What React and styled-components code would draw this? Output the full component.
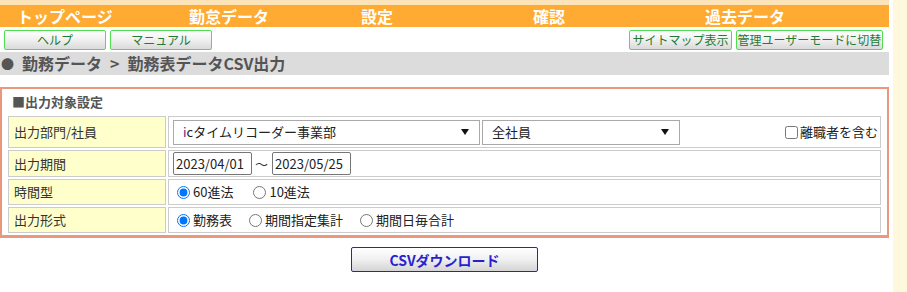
import React from 'react';
import styled, { createGlobalStyle } from 'styled-components';

const GlobalStyle = createGlobalStyle`
  * {
    margin: 0;
    padding: 0;
    box-sizing: border-box;
  }
  body {
    background: #fff;
    font-family: "Noto Sans CJK JP", "Liberation Sans", sans-serif;
    color: #333;
  }
`;

const navItems = ['トップページ', '勤怠データ', '設定', '確認', '過去データ'];

const Page = () => {
  return (
    <Layout>
      <GlobalStyle />
      <Main>
        <TopStrip />
        <Nav>
          {navItems.map((item) => (
            <NavItem key={item}>{item}</NavItem>
          ))}
        </Nav>
        <ToolRow>
          <ToolGroup>
            <GreenButton $w={102}>ヘルプ</GreenButton>
            <GreenButton $w={102}>マニュアル</GreenButton>
          </ToolGroup>
          <ToolGroup>
            <GreenButton $w={103}>サイトマップ表示</GreenButton>
            <GreenButton $w={147}>管理ユーザーモードに切替</GreenButton>
          </ToolGroup>
        </ToolRow>
        <Crumb>
          <span className="dot">●</span>
          <span>勤務データ</span>
          <span className="sep">&gt;</span>
          <span>勤務表データCSV出力</span>
        </Crumb>

        <Section>
          <SectionTitle>■出力対象設定</SectionTitle>
          <FormTable>
            <tbody>
              <Row $h={32}>
                <Label>出力部門/社員</Label>
                <Value>
                  <Line>
                    <FakeSelect $w={307}>
                      <span><i>i</i>cタイムリコーダー事業部</span>
                      <Arrow />
                    </FakeSelect>
                    <FakeSelect $w={198}>
                      <span>全社員</span>
                      <Arrow />
                    </FakeSelect>
                    <Check>
                      <input type="checkbox" />
                      離職者を含む
                    </Check>
                  </Line>
                </Value>
              </Row>
              <Row $h={27}>
                <Label>出力期間</Label>
                <Value>
                  <Line>
                    <DateInput type="text" defaultValue="2023/04/01" />
                    <Tilde>～</Tilde>
                    <DateInput type="text" defaultValue="2023/05/25" />
                  </Line>
                </Value>
              </Row>
              <Row $h={26}>
                <Label>時間型</Label>
                <Value>
                  <Line>
                    <Radio $gap={16}>
                      <input type="radio" name="unit" defaultChecked />
                      60進法
                    </Radio>
                    <Radio>
                      <input type="radio" name="unit" />
                      10進法
                    </Radio>
                  </Line>
                </Value>
              </Row>
              <Row $h={26}>
                <Label>出力形式</Label>
                <Value>
                  <Line>
                    <Radio $gap={13}>
                      <input type="radio" name="kind" defaultChecked />
                      勤務表
                    </Radio>
                    <Radio $gap={13}>
                      <input type="radio" name="kind" />
                      期間指定集計
                    </Radio>
                    <Radio>
                      <input type="radio" name="kind" />
                      期間日毎合計
                    </Radio>
                  </Line>
                </Value>
              </Row>
            </tbody>
          </FormTable>
        </Section>

        <Actions>
          <CsvButton>CSVダウンロード</CsvButton>
        </Actions>
      </Main>
      <Side />
    </Layout>
  );
};

const Layout = styled.div`
  display: flex;
  gap: 4px;
  width: 907px;
  min-height: 292px;
`;

const Main = styled.div`
  width: 889px;
  flex: none;
`;

const Side = styled.div`
  flex: 1;
  background: #fff8dc;
`;

const TopStrip = styled.div`
  height: 5px;
  background: #fde4b8;
`;

const Nav = styled.div`
  display: grid;
  grid-template-columns: repeat(5, 172px);
  height: 22px;
  padding-left: 17px;
  background: #ffaa33;
`;

const NavItem = styled.div`
  color: #fff;
  font-size: 16px;
  font-weight: bold;
  line-height: 22px;
  white-space: nowrap;
`;

const ToolRow = styled.div`
  display: flex;
  justify-content: space-between;
  align-items: center;
  height: 25px;
  padding: 0 6px 0 4px;
`;

const ToolGroup = styled.div`
  display: flex;
  gap: 4px;
`;

const GreenButton = styled.button`
  width: ${(p) => p.$w}px;
  height: 20px;
  border: 1px solid #4ee04e;
  border-radius: 2px;
  background: linear-gradient(#ffffff, #f2f2f2 45%, #d9d9d9);
  color: #237a33;
  font-family: "Noto Sans CJK JP", sans-serif;
  font-size: 12px;
  line-height: 18px;
  white-space: nowrap;
`;

const Crumb = styled.div`
  display: flex;
  align-items: center;
  height: 23px;
  padding-left: 1px;
  background: #dcdcdc;
  color: #555;
  font-size: 16px;
  font-weight: bold;
  line-height: 23px;

  .dot {
    font-size: 13px;
    margin-right: 8px;
  }
  .sep {
    margin: 0 8px;
  }
`;

const Section = styled.div`
  margin-top: 12px;
  border: 2px solid #eb977c;
  border-bottom-width: 3px;
  padding: 0 4px;
`;

const SectionTitle = styled.div`
  height: 25px;
  padding: 2px 0 0 6px;
  color: #555;
  font-size: 13px;
  font-weight: bold;
  line-height: 21px;
`;

const FormTable = styled.table`
  width: 100%;
  border-spacing: 2px;
  font-size: 13px;
  line-height: 16px;
`;

const Row = styled.tr`
  height: ${(p) => p.$h}px;
`;

const Label = styled.td`
  width: 158px;
  padding: 0 0 0 5px;
  border: 1px solid #cccccc;
  background: #ffffcc;
  color: #333;
  vertical-align: middle;
`;

const Value = styled.td`
  padding: 0 2px 0 4px;
  border: 1px solid #cccccc;
  vertical-align: middle;
`;

const Line = styled.div`
  display: flex;
  align-items: center;
`;

const FakeSelect = styled.div`
  display: flex;
  align-items: center;
  justify-content: space-between;
  width: ${(p) => p.$w}px;
  height: 25px;
  margin-right: 2px;
  padding: 0 10px 0 9px;
  border: 1px solid #a9a9a9;
  color: #222;

  i {
    font-style: normal;
    color: #6a2a7a;
  }
`;

const Arrow = styled.span`
  width: 0;
  height: 0;
  border-left: 4px solid transparent;
  border-right: 4px solid transparent;
  border-top: 6px solid #111;
`;

const Check = styled.label`
  display: flex;
  align-items: center;
  margin-left: auto;
  color: #222;

  input {
    width: 13px;
    height: 13px;
    margin: 0 2px 0 0;
  }
`;

const DateInput = styled.input`
  width: 79px;
  height: 23px;
  padding: 0 2px;
  border: 1px solid #767676;
  border-radius: 2px;
  font-family: "Noto Sans CJK JP", sans-serif;
  font-size: 13px;
  color: #222;
`;

const Tilde = styled.span`
  margin: 0 4px 0 3px;
  color: #333;
`;

const Radio = styled.label`
  display: flex;
  align-items: center;
  margin-right: ${(p) => p.$gap || 0}px;
  color: #222;

  input {
    width: 13px;
    height: 13px;
    margin: 0 3px 0 4px;
  }
`;

const Actions = styled.div`
  display: flex;
  justify-content: center;
  padding-top: 9px;
`;

const CsvButton = styled.button`
  width: 187px;
  height: 25px;
  border: 1px solid #2a1fd0;
  border-radius: 2px;
  background: linear-gradient(#ffffff, #f0f0f0 50%, #d4d4d4);
  color: #2a1fd0;
  font-family: "Noto Sans CJK JP", sans-serif;
  font-size: 14px;
  font-weight: bold;
  line-height: 22px;
`;

export default Page;
